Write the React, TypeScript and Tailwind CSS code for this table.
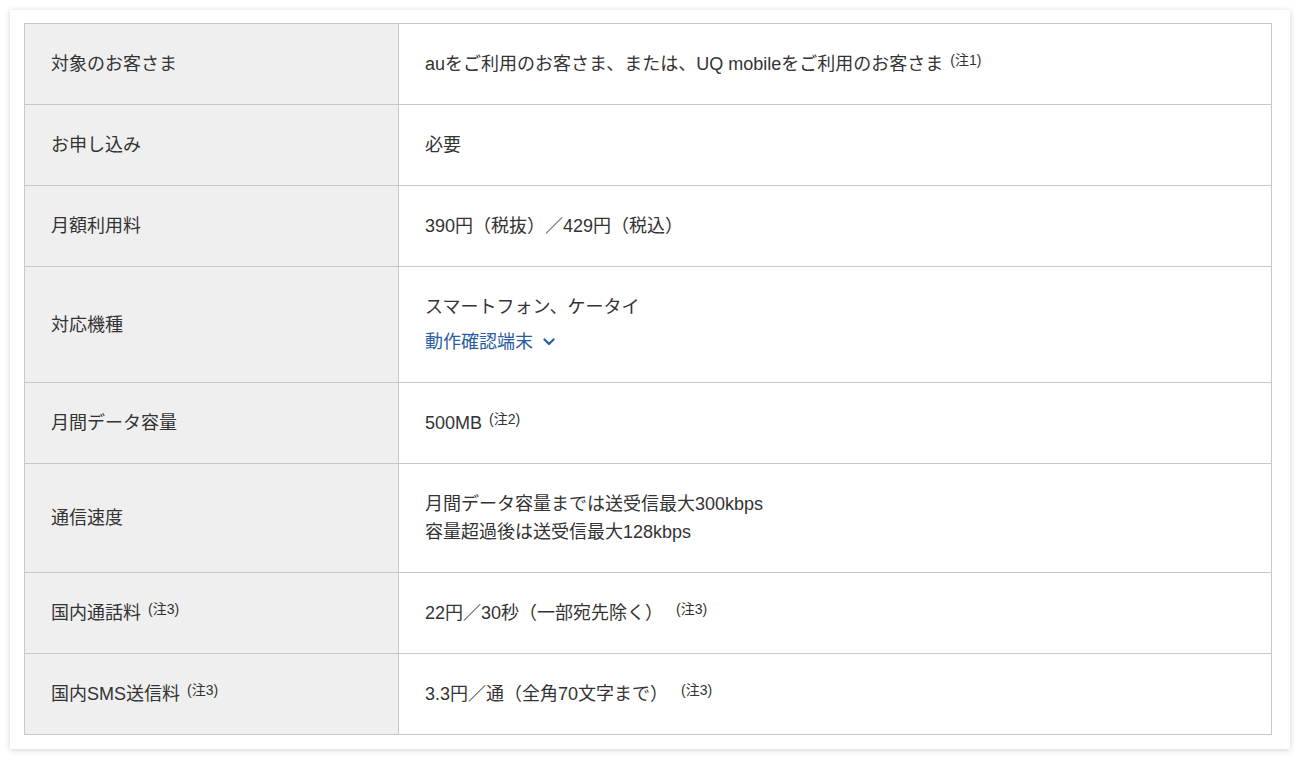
import React from 'react';

const font = { fontFamily: '"Liberation Sans", "Noto Sans CJK JP", sans-serif' };

function Note({ n }: { n: number }) {
    return <sup className="text-[14px] ml-[7px] relative -top-[5px]">(注{n})</sup>;
}

interface Row {
    label: React.ReactNode;
    value: React.ReactNode;
}

const rows: Row[] = [
    {
        label: '対象のお客さま',
        value: <>auをご利用のお客さま、または、UQ mobileをご利用のお客さま<Note n={1} /></>,
    },
    { label: 'お申し込み', value: '必要' },
    { label: '月額利用料', value: '390円（税抜）／429円（税込）' },
    {
        label: '対応機種',
        value: (
            <>
                <div>スマートフォン、ケータイ</div>
                <a href="#" className="mt-[7px] flex items-center gap-[10px] text-[#2a5d9f]">
                    動作確認端末
                    <svg viewBox="0 0 12 8" className="w-[12px] h-[8px]" fill="none" stroke="currentColor" strokeWidth="2.2" strokeLinecap="round" strokeLinejoin="round">
                        <path d="M1.5 1.5 6 6l4.5-4.5" />
                    </svg>
                </a>
            </>
        ),
    },
    { label: '月間データ容量', value: <>500MB<Note n={2} /></> },
    {
        label: '通信速度',
        value: (
            <>
                <div>月間データ容量までは送受信最大300kbps</div>
                <div>容量超過後は送受信最大128kbps</div>
            </>
        ),
    },
    {
        label: <>国内通話料<Note n={3} /></>,
        value: <>22円／30秒（一部宛先除く）<span className="ml-[6px]" /><Note n={3} /></>,
    },
    {
        label: <>国内SMS送信料<Note n={3} /></>,
        value: <>3.3円／通（全角70文字まで）<span className="ml-[6px]" /><Note n={3} /></>,
    },
];

export default function App() {
    return (
        <div className="min-h-screen bg-white p-[10px] text-[#333]" style={font}>
            <div className="bg-white shadow-[0_1px_6px_rgba(0,0,0,0.18)] pl-[14px] pt-[13px] w-[1280px] h-[739px]">
                <table className="w-[1248px] border-collapse border border-[#c8c8c8] text-[18px] leading-[28px]">
                    <tbody>
                        {rows.map((r, i) => (
                            <tr key={i} className="border-b border-[#c8c8c8]">
                                <th className="w-[374px] bg-[#efefef] border-r border-[#c8c8c8] text-left font-normal align-middle pl-[26px] py-[26px]">
                                    {r.label}
                                </th>
                                <td className="align-middle pl-[26px] py-[26px]">{r.value}</td>
                            </tr>
                        ))}
                    </tbody>
                </table>
            </div>
        </div>
    );
}
